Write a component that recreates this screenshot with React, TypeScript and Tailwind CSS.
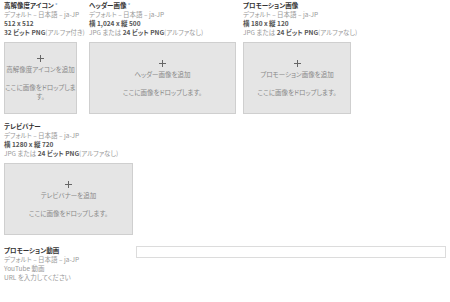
import React from "react";

type Asset = {
  title: string;
  required?: boolean;
  size: React.ReactNode;
  format: React.ReactNode;
  add: string;
  colW: string;
};

const font = { fontFamily: '"Noto Sans CJK JP", "Noto Sans", sans-serif' };

function FieldHead({ title, required, lines }: { title: string; required?: boolean; lines: React.ReactNode[] }) {
  return (
    <div className="text-[6.5px] leading-[9px]">
      <p className="font-bold text-[#333]">
        {title}
        {required && <span className="text-[#7aa7d6] font-normal ml-[1px]">*</span>}
      </p>
      {lines.map((l, i) => (
        <p key={i} className="text-[#999] whitespace-nowrap">{l}</p>
      ))}
    </div>
  );
}

function DropBox({ label }: { label: string }) {
  return (
    <div className="mt-[5px] h-[72px] bg-[#e5e5e5] border border-[#cfcfcf] flex flex-col items-center justify-center text-center">
      <svg width="7" height="7" viewBox="0 0 7 7" className="mb-[3px]">
        <path d="M3.5 0v7M0 3.5h7" stroke="#666" strokeWidth="1" />
      </svg>
      <p className="text-[6.5px] leading-[9px] text-[#888]">{label}</p>
      <p className="text-[6.5px] leading-[9px] text-[#888] mt-[9px]">ここに画像をドロップします。</p>
    </div>
  );
}

const bold = (s: string) => <span className="font-bold text-[#555]">{s}</span>;

const fmtNoAlpha = (
  <>
    JPG または {bold("24 ビット PNG")}(アルファなし)
  </>
);

export default function App() {
  const top: Asset[] = [
    {
      title: "高解像度アイコン",
      required: true,
      size: bold("512 x 512"),
      format: (<>{bold("32 ビット PNG")}(アルファ付き)</>),
      add: "高解像度アイコンを追加",
      colW: "w-[73px]",
    },
    {
      title: "ヘッダー画像",
      required: true,
      size: bold("横 1,024 x 縦 500"),
      format: fmtNoAlpha,
      add: "ヘッダー画像を追加",
      colW: "w-[147px] ml-[12px]",
    },
    {
      title: "プロモーション画像",
      size: bold("横 180 x 縦 120"),
      format: fmtNoAlpha,
      add: "プロモーション画像を追加",
      colW: "w-[108px] ml-[7px]",
    },
  ];

  return (
    <div
      className="w-[450px] h-[302px] bg-white overflow-hidden px-[4px] pt-[1px] [font-feature-settings:'palt']"
      style={font}
    >
      <div className="flex">
        {top.map(a => (
          <div key={a.title} className={`shrink-0 ${a.colW}`}>
            <FieldHead
              title={a.title}
              required={a.required}
              lines={["デフォルト – 日本語 – ja-JP", a.size, a.format]}
            />
            <DropBox label={a.add} />
          </div>
        ))}
      </div>

      <div className="mt-[8px] w-[129px]">
        <FieldHead
          title="テレビバナー"
          lines={["デフォルト – 日本語 – ja-JP", bold("横 1280 x 縦 720"), fmtNoAlpha]}
        />
        <DropBox label="テレビバナーを追加" />
      </div>

      <div className="mt-[11px] flex">
        <div className="w-[132px] shrink-0">
          <FieldHead
            title="プロモーション動画"
            lines={["デフォルト – 日本語 – ja-JP", "YouTube 動画", "URL を入力してください"]}
          />
        </div>
        <input
          type="text"
          className="flex-1 min-w-0 h-[12px] border border-[#dcdcdc] bg-white outline-none"
        />
      </div>
    </div>
  );
}
